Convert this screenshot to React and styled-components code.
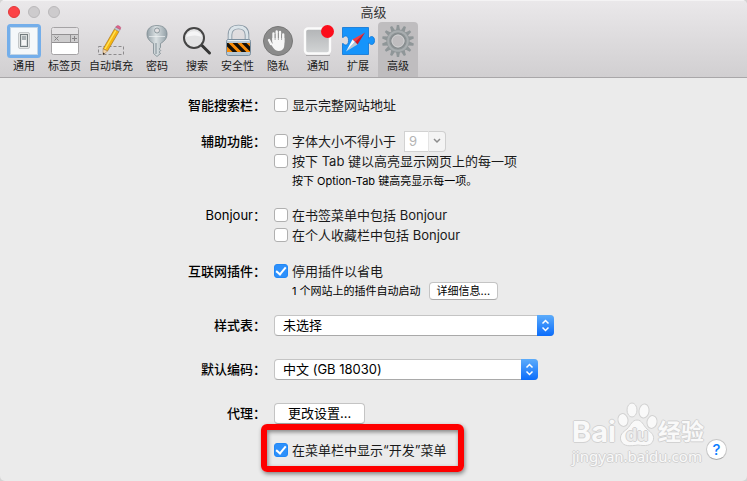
import React from "react";
import styled, { createGlobalStyle } from "styled-components";

const GlobalStyle = createGlobalStyle`
  * {
    box-sizing: border-box;
  }

  body {
    margin: 0;
    background: #d4d4d4;
    color: #000;
    font-family: Inter, "Noto Sans CJK SC", sans-serif;
    font-size: 13px;
  }

  button,
  input,
  select {
    margin: 0;
    font-family: inherit;
    color: inherit;
  }
`;

const StyledWindow = styled.div`
  position: relative;
  min-height: 100vh;
  background: #ebebeb;
  border-radius: 5px;
  overflow: hidden;
`;

const Header = styled.header`
  background: linear-gradient(#eae8ea, #d1cfd1);
  border-top: 1px solid #f4f3f4;
  border-bottom: 1px solid #a9a7a9;
`;

const TitleBar = styled.div`
  display: grid;
  grid-template-columns: 1fr auto 1fr;
  align-items: center;
  height: 21px;
  padding: 0 8px;

  h1 {
    margin: 0;
    font-size: 13px;
    line-height: 20px;
    font-weight: 400;
    color: #333;
  }
`;

const Lights = styled.div`
  display: flex;
  gap: 8px;
`;

const Light = styled.button`
  width: 12px;
  height: 12px;
  padding: 0;
  border: 1px solid ${(props) => (props.$close ? "#e2383a" : "#bab8ba")};
  border-radius: 50%;
  background: ${(props) => (props.$close ? "#fc4347" : "#cdcbcd")};
`;

const Toolbar = styled.nav`
  display: flex;
  padding: 0 4px;
`;

const ToolButton = styled.button`
  display: flex;
  flex-direction: column;
  align-items: center;
  min-width: 40px;
  height: 55px;
  padding: 2px 4px 0;
  border: 0;
  border-radius: 4px 4px 0 0;
  background: ${(props) => (props.$active ? "#bfbdbf" : "transparent")};
  font-size: 11px;
  line-height: 16px;
  color: #1c1c1c;
  white-space: nowrap;

  svg {
    display: block;
    flex: none;
    width: 34px;
    height: 34px;
    margin: 0 -4px;
  }
`;

const Form = styled.form`
  padding-top: 17px;
`;

const Row = styled.div`
  display: grid;
  grid-template-columns: 80px 287px;
  column-gap: 8px;
  justify-content: center;
  margin-bottom: ${(props) => props.$space || 16}px;
`;

const RowLabel = styled.div`
  line-height: 20px;
  font-weight: ${(props) => (props.$light ? 400 : 500)};
  text-align: right;
  white-space: nowrap;
`;

const Fields = styled.div`
  display: flex;
  flex-direction: column;
  align-items: flex-start;
`;

const Line = styled.div`
  display: flex;
  align-items: center;
  gap: 8px;
  height: 20px;
`;

const CheckLabel = styled.label`
  display: flex;
  align-items: center;
  gap: 4px;
  line-height: 20px;
  white-space: nowrap;
  color: #1a1a1a;
`;

const CheckBox = styled.input`
  appearance: none;
  display: grid;
  place-items: center;
  width: 14px;
  height: 14px;
  border: 1px solid #b0b0b0;
  border-radius: 3px;
  background: #fff;

  &:checked {
    border-color: #2188f7;
    background: #2d90fb;
  }

  &:checked::before {
    content: "";
    width: 4px;
    height: 8px;
    margin-bottom: 2px;
    border: solid #fff;
    border-width: 0 2px 2px 0;
    transform: rotate(40deg);
  }
`;

const Hint = styled.p`
  margin: 0;
  padding-left: 18px;
  font-size: 11px;
  line-height: 20px;
  white-space: nowrap;
`;

const Combo = styled.div`
  display: flex;
  width: 42px;
  height: 21px;
  color: #b4b4b4;

  input {
    width: 24px;
    height: 21px;
    padding: 0 4px;
    border: 1px solid #d2d2d2;
    border-right: 0;
    background: #fff;
    font-size: 13px;
  }

  button {
    display: grid;
    place-items: center;
    width: 18px;
    height: 21px;
    padding: 0;
    border: 1px solid #cfcfcf;
    border-left-color: #e4e4e4;
    border-radius: 0 4px 4px 0;
    background: #f4f4f4;
    color: #8c8c8c;
  }
`;

const PushButton = styled.button`
  height: ${(props) => (props.$small ? 18 : 21)}px;
  padding: 0 ${(props) => (props.$small ? 7 : 13)}px 2px;
  border: 1px solid #c4c4c4;
  border-bottom-color: #a9a9a9;
  border-radius: 4px;
  background: #fff;
  font-size: ${(props) => (props.$small ? 11 : 13)}px;
  line-height: 16px;
  white-space: nowrap;
`;

const SelectBox = styled.div`
  position: relative;
  width: ${(props) => props.$width}px;
  height: 22px;

  select {
    appearance: none;
    display: block;
    width: 100%;
    height: 21px;
    padding: 0 24px 2px 8px;
    border: 1px solid #c4c4c4;
    border-bottom-color: #a9a9a9;
    border-radius: 4px;
    background: #fff;
    font-size: 13px;
    line-height: 16px;
  }

  svg {
    position: absolute;
    top: 0;
    right: 0;
    width: 17px;
    height: 21px;
    border-radius: 0 4px 4px 0;
    background: linear-gradient(#5cacfb, #0a6cfb);
    pointer-events: none;
  }
`;

const Highlight = styled.div`
  position: relative;

  &::after {
    content: "";
    position: absolute;
    inset: -16px -18px -12px -13px;
    border: 6px solid #fe0000;
    border-radius: 6px;
    box-shadow: 1px 2px 4px rgba(0, 0, 0, 0.45), inset 1px 2px 4px rgba(0, 0, 0, 0.45);
    pointer-events: none;
  }
`;

const Corner = styled.footer`
  position: absolute;
  right: 20px;
  bottom: 16px;
  display: flex;
  align-items: flex-end;
`;

const Watermark = styled.div`
  width: 134px;
  color: #f9f9f9;
  text-shadow: 1px 0 #d2d2d2, -1px 0 #d2d2d2, 0 1px #d2d2d2, 0 -1px #d2d2d2;
  white-space: nowrap;
`;

const Brand = styled.div`
  display: flex;
  align-items: flex-end;
  font-size: 29px;
  line-height: 30px;
  font-weight: 700;

  svg {
    flex: none;
    width: 42px;
    height: 46px;
  }

  span {
    font-size: 23px;
  }
`;

const Site = styled.div`
  font-family: "Noto Sans", sans-serif;
  font-size: 15px;
  line-height: 18px;
`;

const HelpButton = styled.button`
  width: 21px;
  height: 21px;
  margin-bottom: 5px;
  padding: 0;
  border: 1px solid #c6c6c6;
  border-bottom-color: #a8a8a8;
  border-radius: 50%;
  background: #fff;
  color: #0a7dff;
  font-size: 15px;
  line-height: 18px;
  font-weight: 500;
`;

const GeneralIcon = () => (
  <svg viewBox="0 0 34 34">
    <rect x="1.5" y="1.5" width="31" height="31" rx="2" fill="#fdfdfd" stroke="#74aeea" strokeWidth="3" />
    <rect x="3.5" y="3.5" width="27" height="27" fill="#f5f8fa" stroke="#c2d5e6" />
    <rect x="11.5" y="8.5" width="11" height="16" rx="1.5" fill="#e4e6e6" stroke="#c3c7c9" />
    <rect x="13.5" y="10.5" width="7" height="12" fill="#d9dddd" stroke="#737b7e" />
    <rect x="15" y="12" width="4" height="4" fill="#a9b0b3" />
    <rect x="15" y="16" width="4" height="5" fill="#f5f5f5" />
  </svg>
);

const TabsIcon = () => (
  <svg viewBox="0 0 34 34">
    <rect x="3.5" y="3.5" width="27" height="27" rx="2" fill="#fff" stroke="#a5a3a5" />
    <path d="M4 10V6q0-2 2-2h22q2 0 2 2v4z" fill="#e4e2e4" />
    <rect x="4" y="10" width="26" height="9" fill="#cecdce" />
    <path d="M4 10.5h26M4 18.5h26M22.5 10v9" stroke="#929092" fill="none" />
    <path d="M6.5 12.5l4 4m0-4l-4 4M26.5 12v5m-2.5-2.5h5" stroke="#858385" fill="none" />
  </svg>
);

const PencilIcon = () => (
  <svg viewBox="0 0 34 34">
    <rect x="4.5" y="22.5" width="25" height="8" fill="none" stroke="#8d8b8d" strokeDasharray="3 2" />
    <path d="M20.5 5l4.5 2.5L13.5 27 9 25z" fill="#f6b611" stroke="#a06a14" strokeWidth=".6" />
    <path d="M21.8 6.5L11 25" stroke="#ffe45a" strokeWidth="1.4" />
    <path d="M9 25l4.5 2-4.5 4z" fill="#f3d4a7" stroke="#a17d52" strokeWidth=".5" />
    <path d="M9 28.5l1.8.9L9 31z" fill="#332b28" />
    <path d="M20.5 5l1.2-2 4.5 2.5-1.2 2z" fill="#c3c8ce" stroke="#80858b" strokeWidth=".4" />
    <path d="M21.7 3Q23 .6 25.3 1.9T26.2 5.5z" fill="#e0628a" stroke="#a8446a" strokeWidth=".4" />
  </svg>
);

const KeyIcon = () => (
  <svg viewBox="0 0 34 34">
    <defs>
      <linearGradient id="key" x1="0" x2="1">
        <stop offset="0" stopColor="#93a0a7" />
        <stop offset=".45" stopColor="#dbe1e3" />
        <stop offset="1" stopColor="#93a0a7" />
      </linearGradient>
    </defs>
    <path
      fillRule="evenodd"
      d="M17 1.5c7 0 10 4 10 8.5 0 4-2 7-6.5 9.5v4l-1.3 1.5 1.5 1.5-1.5 1.5 1.3 1.5-3.5 3-3.5-3V19.5C9 17 7 14 7 10c0-4.5 3-8.5 10-8.5zM17 4a2.5 2.5 0 1 0 0 5 2.5 2.5 0 0 0 0-5z"
      fill="url(#key)"
      stroke="#7d8b92"
      strokeWidth=".8"
    />
    <path d="M16 19v11" stroke="#7c8a92" />
    <path d="M9 12.5h16" stroke="#eff2f3" opacity=".7" />
  </svg>
);

const SearchIcon = () => (
  <svg viewBox="0 0 34 34">
    <path d="M22 21.5l7.5 7.5" stroke="#353535" strokeWidth="3" strokeLinecap="round" />
    <circle cx="14" cy="14" r="10" fill="#e3e3e4" stroke="#454545" strokeWidth="2" />
    <path d="M6 13a8.5 8.5 0 0 1 16 0q-7-3-16 0z" fill="#f5f5f6" />
  </svg>
);

const LockIcon = () => (
  <svg viewBox="0 0 34 34">
    <defs>
      <clipPath id="plate">
        <rect x="6" y="19" width="23" height="9" />
      </clipPath>
    </defs>
    <path d="M9 17v-6q0-8 8.5-8T26 11v6" fill="none" stroke="#8a99a5" strokeWidth="4.6" />
    <path d="M9 17v-6q0-8 8.5-8T26 11v6" fill="none" stroke="#dbe4e9" strokeWidth="2.8" />
    <rect x="5.5" y="15.5" width="24" height="16" rx="2" fill="#b8c8d4" stroke="#7a8e9e" />
    <path d="M6.5 16.5h22" stroke="#eaf1f5" />
    <rect x="6" y="19" width="23" height="9" fill="#f98c08" />
    <g clipPath="url(#plate)" stroke="#151008" strokeWidth="3.4">
      <path d="M3 17l13 13M12 17l13 13M21 17l13 13" />
    </g>
  </svg>
);

const HandIcon = () => (
  <svg viewBox="0 0 34 34">
    <circle cx="17" cy="17" r="14.5" fill="#8b8b8b" stroke="#777" />
    <g fill="none" stroke="#f6f6f6" strokeWidth="2.4" strokeLinecap="round">
      <path d="M12.5 17V9.5M15.7 16V7.5M19 16V8M22.2 18v-7.5M10 20l-2-4" />
    </g>
    <path d="M11.3 14h12.1v6q0 7-5.5 7-3.5 0-5.5-3L9 19q1.5-1 2.5 1z" fill="#f6f6f6" />
    <path d="M14.1 10v6M17.4 9v7M20.6 10v6" stroke="#8b8b8b" strokeWidth=".7" />
  </svg>
);

const NoticeIcon = () => (
  <svg viewBox="0 0 34 34">
    <defs>
      <linearGradient id="notice" x2="0" y2="1">
        <stop stopColor="#b2b4b6" />
        <stop offset="1" stopColor="#d3d5d6" />
      </linearGradient>
    </defs>
    <path d="M5 31.5h24" stroke="#aaa8aa" />
    <rect x="4" y="4.5" width="25" height="25" rx="3" fill="url(#notice)" stroke="#fbfbfb" strokeWidth="2.4" />
    <circle cx="26.5" cy="7.5" r="6.5" fill="#fc0d1b" />
  </svg>
);

const ExtensionIcon = () => (
  <svg viewBox="0 0 34 34">
    <path
      d="M1.5 3.5H27.5V14c1.5 0 1.5-1.5 3-1.5 2 0 3 1.5 3 4s-1 4-3 4c-1.5 0-1.5-1.5-3-1.5V30.5H1.5V19.5c1.5 0 1.5 1.5 3 1.5 2 0 3-1.5 3-4.5s-1-4.5-3-4.5c-1.5 0-1.5 1.5-3 1.5z"
      fill="#1594fb"
      stroke="#0b74d4"
      strokeWidth=".8"
    />
    <path d="M24 8.5L11.5 15.5l2.5 2.5z" fill="#fb3b40" />
    <path d="M24 8.5L16.5 20.5 14 18z" fill="#d9141f" />
    <path d="M5 27.5l6.5-12L14 18z" fill="#fbfcfc" />
    <path d="M5 27.5l9-9.5 2.5 2.5z" fill="#bcc8d2" />
  </svg>
);

const teeth = Array.from({ length: 14 }, (_, i) => (i * 360) / 14);

const GearIcon = () => (
  <svg viewBox="0 0 34 34">
    <g fill="#8f9698">
      {teeth.map((angle) => (
        <path key={angle} d="M14.9 6.5l1-5.5h2.2l1 5.5z" transform={`rotate(${angle} 17 17)`} />
      ))}
    </g>
    <circle cx="17" cy="17" r="9.5" fill="none" stroke="#8f9698" strokeWidth="4" />
    <circle cx="17" cy="17" r="9.8" fill="none" stroke="#a8adaf" strokeWidth="2" />
    <circle cx="17" cy="17" r="7.2" fill="#bfbdbf" stroke="#858b8d" strokeWidth="1.4" />
    <circle cx="17" cy="17" r="6" fill="none" stroke="#cfd0d1" strokeWidth="1" />
  </svg>
);

const PawIcon = () => (
  <svg viewBox="0 0 42 46" fill="#f9f9f9" stroke="#d2d2d2">
    <ellipse cx="7" cy="19" rx="5" ry="6.5" transform="rotate(-12 7 19)" />
    <ellipse cx="16" cy="9" rx="5" ry="7" />
    <ellipse cx="28" cy="10" rx="5" ry="7" transform="rotate(8 28 10)" />
    <ellipse cx="36" cy="21" rx="5" ry="6.5" transform="rotate(12 36 21)" />
    <path d="M21 19c5 0 6 5 10 9 5 4 8 7 6 12-2 5-8 5-15 4-8 1-14 2-17-4-2-6 2-9 6-12 4-4 5-9 10-9z" />
    <text x="21" y="40" textAnchor="middle" fontSize="18" fontWeight="700" fill="#ececec" stroke="none">
      du
    </text>
  </svg>
);

const tools = [
  { name: "通用", icon: <GeneralIcon /> },
  { name: "标签页", icon: <TabsIcon /> },
  { name: "自动填充", icon: <PencilIcon /> },
  { name: "密码", icon: <KeyIcon /> },
  { name: "搜索", icon: <SearchIcon /> },
  { name: "安全性", icon: <LockIcon /> },
  { name: "隐私", icon: <HandIcon /> },
  { name: "通知", icon: <NoticeIcon /> },
  { name: "扩展", icon: <ExtensionIcon /> },
  { name: "高级", icon: <GearIcon />, active: true },
];

const Check = ({ children, checked }) => (
  <CheckLabel>
    <CheckBox type="checkbox" defaultChecked={checked} />
    {children}
  </CheckLabel>
);

const Select = ({ id, width, value }) => (
  <SelectBox $width={width}>
    <select id={id}>
      <option>{value}</option>
    </select>
    <svg viewBox="0 0 17 21" fill="none" stroke="#fff" strokeWidth="1.5">
      <path d="M5.5 8.5l3-3 3 3M5.5 12.5l3 3 3-3" />
    </svg>
  </SelectBox>
);

const App = () => {
  return (
    <>
      <GlobalStyle />
      <StyledWindow>
        <Header>
          <TitleBar>
            <Lights>
              <Light type="button" aria-label="关闭" $close />
              <Light type="button" aria-label="最小化" />
              <Light type="button" aria-label="缩放" />
            </Lights>
            <h1>高级</h1>
          </TitleBar>
          <Toolbar>
            {tools.map((tool) => (
              <ToolButton key={tool.name} type="button" $active={tool.active}>
                {tool.icon}
                {tool.name}
              </ToolButton>
            ))}
          </Toolbar>
        </Header>

        <Form>
          <Row>
            <RowLabel>智能搜索栏：</RowLabel>
            <Fields>
              <Check>显示完整网站地址</Check>
            </Fields>
          </Row>

          <Row $space={14}>
            <RowLabel>辅助功能：</RowLabel>
            <Fields>
              <Line>
                <Check>字体大小不得小于</Check>
                <Combo>
                  <input type="text" aria-label="字体大小" defaultValue="9" disabled />
                  <button type="button" aria-label="选择字体大小" disabled>
                    <svg width="8" height="6" viewBox="0 0 8 6" fill="none" stroke="currentColor" strokeWidth="1.5">
                      <path d="M1 1l3 3 3-3" />
                    </svg>
                  </button>
                </Combo>
              </Line>
              <Check>按下 Tab 键以高亮显示网页上的每一项</Check>
              <Hint>按下 Option-Tab 键高亮显示每一项。</Hint>
            </Fields>
          </Row>

          <Row>
            <RowLabel $light>Bonjour：</RowLabel>
            <Fields>
              <Check>在书签菜单中包括 Bonjour</Check>
              <Check>在个人收藏栏中包括 Bonjour</Check>
            </Fields>
          </Row>

          <Row $space={14}>
            <RowLabel>互联网插件：</RowLabel>
            <Fields>
              <Check checked>停用插件以省电</Check>
              <Line>
                <Hint>1 个网站上的插件自动启动</Hint>
                <PushButton type="button" $small>
                  详细信息...
                </PushButton>
              </Line>
            </Fields>
          </Row>

          <Row $space={22}>
            <RowLabel as="label" htmlFor="styles">
              样式表：
            </RowLabel>
            <Select id="styles" width={280} value="未选择" />
          </Row>

          <Row $space={22}>
            <RowLabel as="label" htmlFor="encoding">
              默认编码：
            </RowLabel>
            <Select id="encoding" width={264} value="中文 (GB 18030)" />
          </Row>

          <Row>
            <RowLabel>代理：</RowLabel>
            <Fields>
              <PushButton type="button">更改设置...</PushButton>
            </Fields>
          </Row>

          <Row>
            <RowLabel />
            <Fields>
              <Highlight>
                <Check checked>在菜单栏中显示“开发”菜单</Check>
              </Highlight>
            </Fields>
          </Row>
        </Form>

        <Corner>
          <Watermark>
            <Brand>
              Bai
              <PawIcon />
              <span>经验</span>
            </Brand>
            <Site>jingyan.baidu.com</Site>
          </Watermark>
          <HelpButton type="button">?</HelpButton>
        </Corner>
      </StyledWindow>
    </>
  );
};

export default App;
